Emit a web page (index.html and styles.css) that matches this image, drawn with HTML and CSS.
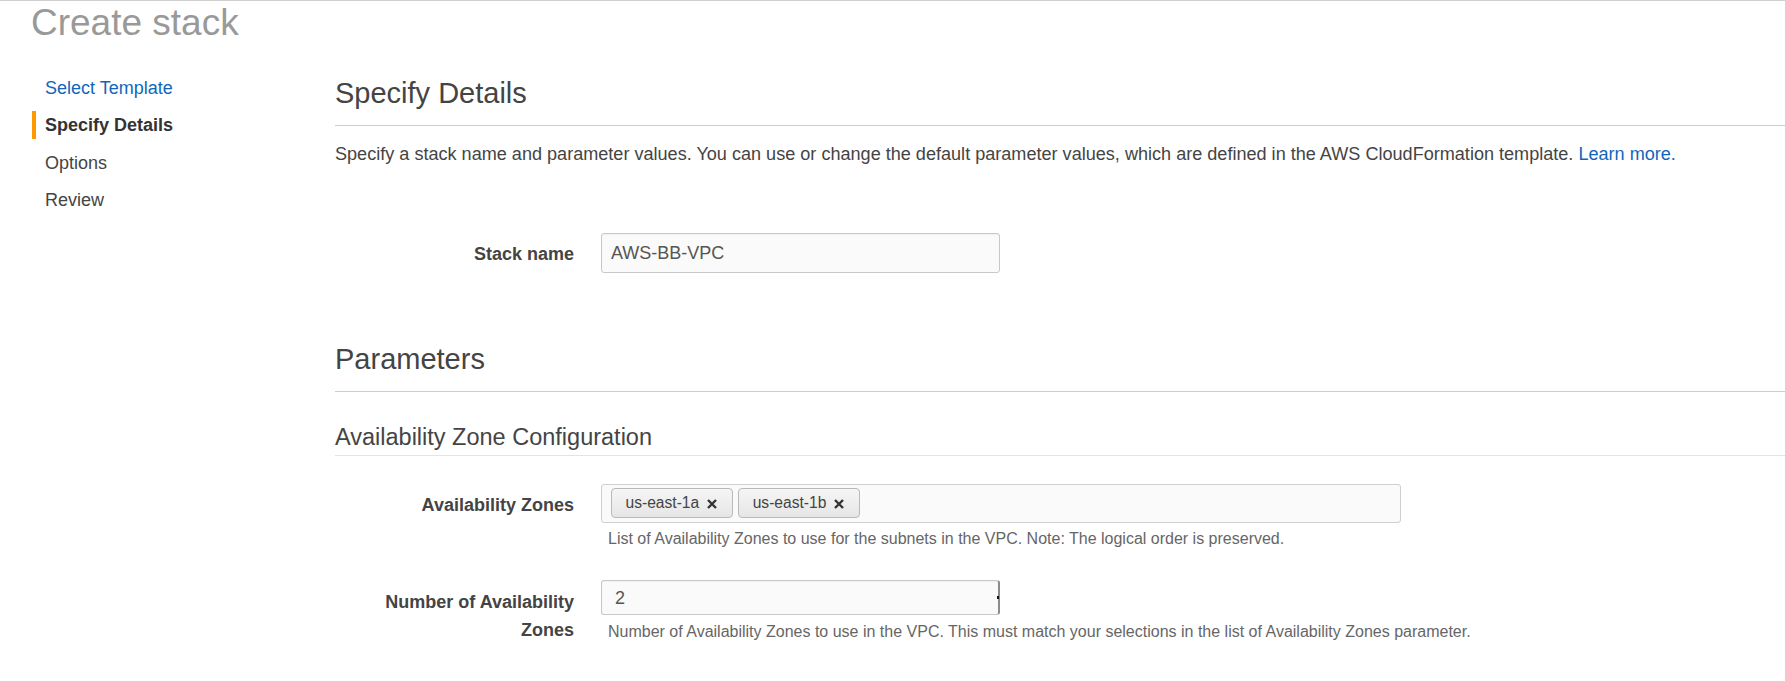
FILE: index.html
```html
<!DOCTYPE html>
<html lang="en">
<head>
<meta charset="utf-8">
<title>Create stack</title>
<link rel="stylesheet" href="styles.css">
</head>
<body>
<div class="page">
  <h1 class="page-title">Create stack</h1>
  <div class="layout">
    <nav class="steps">
      <a class="step step-link" href="#">Select Template</a>
      <span class="step step-active">Specify Details</span>
      <span class="step">Options</span>
      <span class="step">Review</span>
    </nav>
    <main class="content">
      <h2 class="section-title">Specify Details</h2>
      <p class="intro">Specify a stack name and parameter values. You can use or change the default parameter values, which are defined in the AWS CloudFormation template. <a class="link" href="#">Learn more.</a></p>

      <div class="form-row row-stack">
        <label class="field-label">Stack name</label>
        <div class="field">
          <input class="text-input" type="text" value="AWS-BB-VPC">
        </div>
      </div>

      <h2 class="section-title params-title">Parameters</h2>
      <h3 class="group-title">Availability Zone Configuration</h3>

      <div class="form-row row-az">
        <label class="field-label">Availability Zones</label>
        <div class="field">
          <div class="multi-select">
            <span class="token">us-east-1a<svg class="token-x" viewBox="0 0 10 10" width="10" height="10"><path d="M1 1 L9 9 M9 1 L1 9" /></svg></span>
            <span class="token">us-east-1b<svg class="token-x" viewBox="0 0 10 10" width="10" height="10"><path d="M1 1 L9 9 M9 1 L1 9" /></svg></span>
          </div>
          <div class="help">List of Availability Zones to use for the subnets in the VPC. Note: The logical order is preserved.</div>
        </div>
      </div>

      <div class="form-row row-num">
        <label class="field-label">Number of Availability Zones</label>
        <div class="field">
          <span class="num-wrap"><input class="text-input num-input" type="text" value="2"></span>
          <div class="help help-num">Number of Availability Zones to use in the VPC. This must match your selections in the list of Availability Zones parameter.</div>
        </div>
      </div>
    </main>
  </div>
</div>
</body>
</html>
```

FILE: styles.css
```css
html, body {
  margin: 0;
  padding: 0;
  background: #fff;
}

body {
  font-family: "Liberation Sans", Arial, sans-serif;
  font-size: 18px;
  color: #444;
}

.page {
  border-top: 1px solid #cfcfcf;
  min-height: 680px;
}

.page-title {
  margin: 1px 0 0 0;
  padding-left: 31px;
  font-size: 37px;
  line-height: 42px;
  font-weight: normal;
  color: #999;
}

.layout {
  display: flex;
  align-items: flex-start;
}

.steps {
  width: 303px;
  margin-left: 32px;
  margin-top: 25px;
  display: flex;
  flex-direction: column;
  flex-shrink: 0;
}

.step {
  display: block;
  line-height: 28px;
  padding: 4.75px 0 4.75px 13px;
  color: #444;
  text-decoration: none;
}

.step-link {
  color: #1166bb;
}

.step-active {
  font-weight: bold;
  color: #333;
  border-left: 4px solid #ff9900;
  padding-left: 9px;
  margin: 4.75px 0;
  padding-top: 0;
  padding-bottom: 0;
}

.content {
  flex: 1;
  margin-top: 31px;
  min-width: 0;
}

.section-title {
  margin: 0;
  font-size: 29px;
  line-height: 36px;
  font-weight: normal;
  color: #444;
  padding-bottom: 13.7px;
  border-bottom: 1px solid #cccccc;
}

.intro {
  margin: 16.8px 0 0 0;
  line-height: 24px;
  font-size: 18.08px;
  white-space: nowrap;
}

.link {
  color: #1166bb;
  text-decoration: none;
}

.form-row {
  display: grid;
  grid-template-columns: 239px 1fr;
  column-gap: 27px;
  align-items: start;
}

.row-stack {
  margin-top: 66.2px;
}

.field-label {
  display: block;
  text-align: right;
  font-weight: bold;
  line-height: 28px;
  padding-top: 7.5px;
  color: #444;
}

.text-input {
  display: block;
  box-sizing: border-box;
  width: 399px;
  height: 40px;
  margin: 0;
  padding: 2px 9px 0 9px;
  border: 1px solid #c8c8c8;
  border-radius: 3px;
  background: #fafafa;
  font-family: "Liberation Sans", Arial, sans-serif;
  font-size: 18px;
  color: #555;
  box-shadow: inset 0 1px 1px rgba(0, 0, 0, 0.04);
}

.params-title {
  margin-top: 68.3px;
}

.group-title {
  margin: 29.9px 0 0 0;
  font-size: 23.5px;
  line-height: 30px;
  font-weight: normal;
  color: #444;
  padding-bottom: 3.1px;
  border-bottom: 1px solid #e3e3e3;
}

.row-az {
  margin-top: 28px;
}

.multi-select {
  box-sizing: border-box;
  width: 800px;
  height: 39px;
  border: 1px solid #cfcfcf;
  border-radius: 3px;
  background: #fafafa;
  padding: 3.7px 9px;
  display: flex;
  align-items: center;
  gap: 5px;
}

.token {
  box-sizing: border-box;
  height: 30.3px;
  display: inline-flex;
  align-items: center;
  padding: 0 15px 0 13.5px;
  border: 1px solid #b9b9b9;
  border-radius: 4px;
  background: linear-gradient(#f5f5f5, #e6e6e6);
  font-size: 15.6px;
  color: #444;
}

.token-x {
  margin-left: 8px;
  margin-top: 2px;
  width: 10px;
  height: 10px;
}

.token-x path {
  stroke: #333;
  stroke-width: 2.4;
  fill: none;
}

.help {
  margin-top: 6.5px;
  padding-left: 7px;
  font-size: 16px;
  line-height: 20px;
  color: #666;
}

.row-num {
  margin-top: 31px;
}

.num-wrap {
  position: relative;
  display: block;
  width: 399px;
}

.num-input {
  height: 35px;
  padding-left: 13px;
  padding-top: 1px;
  border-right: 2px solid #8c8c8c;
}

.num-wrap::after {
  content: "";
  position: absolute;
  left: 396px;
  top: 16px;
  width: 2px;
  height: 3px;
  background: #111;
}

.help-num {
  margin-top: 7px;
}
```
